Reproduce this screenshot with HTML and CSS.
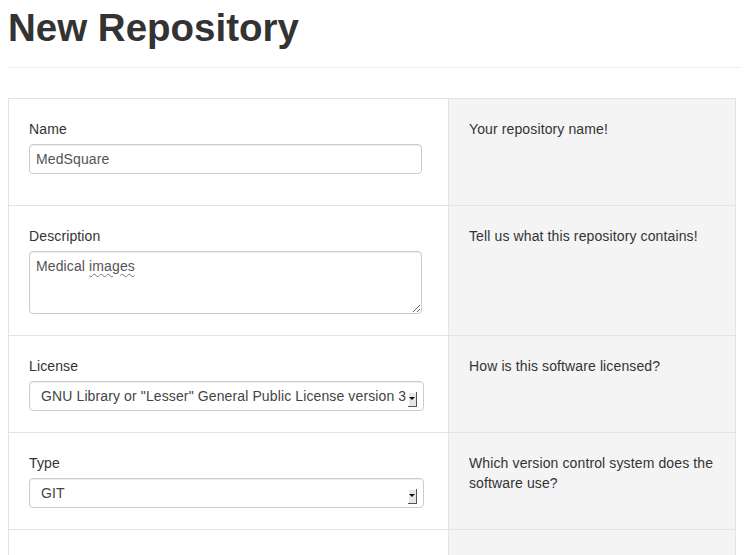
FILE: index.html
```html
<!DOCTYPE html>
<html>
<head>
<meta charset="utf-8">
<title>New Repository</title>
<link rel="stylesheet" href="styles.css">
</head>
<body>
<div class="page-header">
  <h1>New Repository</h1>
</div>
<form class="form-table">
  <div class="cell field">
    <label class="label">Name</label>
    <input class="input" type="text" value="MedSquare">
  </div>
  <div class="cell help">Your repository name!</div>

  <div class="cell field">
    <label class="label">Description</label>
    <div class="textarea" role="textbox">Medical <span class="misspelled">images</span></div>
  </div>
  <div class="cell help">Tell us what this repository contains!</div>

  <div class="cell field">
    <label class="label">License</label>
    <div class="select">
      <span class="select-text">GNU Library or "Lesser" General Public License version 3</span>
      <span class="select-btn"></span>
    </div>
  </div>
  <div class="cell help">How is this software licensed?</div>

  <div class="cell field">
    <label class="label">Type</label>
    <div class="select">
      <span class="select-text">GIT</span>
      <span class="select-btn"></span>
    </div>
  </div>
  <div class="cell help">Which version control system does the software use?</div>

  <div class="cell field tall"></div>
  <div class="cell help tall"></div>
</form>
</body>
</html>
```

FILE: styles.css
```css
html, body {
  margin: 0;
  padding: 0;
}
body {
  margin: 8px;
  font-family: "Liberation Sans", Arial, sans-serif;
  font-size: 14px;
  line-height: 20px;
  color: #333;
  background: #fff;
  overflow: hidden;
}
.page-header {
  padding-bottom: 9px;
  margin: 0 -8px 30px 0;
  border-bottom: 1px solid #eee;
}
.page-header h1 {
  margin: 0 0 10px;
  font-size: 38.5px;
  line-height: 40px;
  font-weight: bold;
  color: #333;
}
.form-table {
  display: grid;
  grid-template-columns: 440px 287px;
  border-left: 1px solid #e3e3e3;
  border-top: 1px solid #e3e3e3;
  width: 727px;
  margin: 0;
}
.cell {
  border-right: 1px solid #e3e3e3;
  border-bottom: 1px solid #e3e3e3;
  padding: 20px 20px 21px;
  letter-spacing: 0.12px;
}
.help {
  background: #f4f4f4;
}
.field {
  display: flex;
  flex-direction: column;
  align-items: flex-start;
}
.tall {
  height: 60px;
}
.label {
  display: block;
  line-height: 20px;
  margin-bottom: 5px;
  color: #333;
}
.input, .textarea, .select {
  box-sizing: border-box;
  border: 1px solid #ccc;
  border-radius: 4px;
  box-shadow: inset 0 1px 1px rgba(0,0,0,0.075);
  background: #fff;
  font-family: "Liberation Sans", Arial, sans-serif;
  font-size: 14px;
  color: #555;
  letter-spacing: 0.12px;
}
.input {
  width: 393px;
  height: 30px;
  padding: 4px 6px;
  line-height: 20px;
  margin: 0 0 10px;
  outline: none;
}
.textarea {
  width: 393px;
  height: 63px;
  padding: 4px 6px;
  line-height: 20px;
  overflow: auto;
  resize: both;
}
.misspelled {
  text-decoration: underline wavy #777;
  text-decoration-thickness: 1px;
  text-underline-offset: 2px;
}
.select {
  position: relative;
  width: 395px;
  height: 30px;
  padding: 4px 17px 4px 11px;
  line-height: 20px;
  white-space: nowrap;
  overflow: hidden;
}
.select-text {
  display: block;
  overflow: hidden;
  color: #444;
}
.select-btn {
  position: absolute;
  right: 6px;
  top: 10px;
  width: 8px;
  height: 14px;
  background: #e6e6e6;
  border-right: 1px solid #555;
  border-bottom: 1px solid #555;
  box-shadow: inset 1px 1px 0 #fff;
}
.select-btn::after {
  content: "";
  position: absolute;
  left: 1px;
  top: 5px;
  border-left: 3px solid transparent;
  border-right: 3px solid transparent;
  border-top: 3px solid #111;
}
```
